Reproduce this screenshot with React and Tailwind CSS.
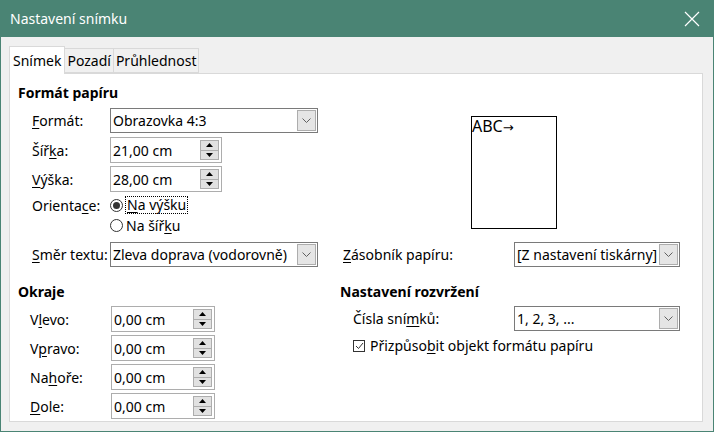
import React from 'react';

const font = "font-['Segoe_UI','Noto_Sans','Open_Sans',sans-serif]";

const U = ({ children }) => <span className="underline underline-offset-2">{children}</span>;

const Chevron = () => (
  <svg width="9" height="6" viewBox="0 0 9 6" fill="none">
    <path d="M0.5 0.5 L4.5 4.5 L8.5 0.5" stroke="#606060" strokeWidth="1" />
  </svg>
);

const Select = ({ value, w }) => (
  <div className={`flex h-[25px] items-stretch border border-[#7a7a7a] bg-white ${w}`}>
    <div className="flex flex-1 items-center overflow-hidden whitespace-nowrap pl-[2px]">{value}</div>
    <div className="m-px flex w-[19px] items-center justify-center border border-[#adadad] bg-[#e5e5e5]">
      <Chevron />
    </div>
  </div>
);

const Spin = ({ value, w }) => (
  <div className={`flex h-[26px] items-stretch border border-[#adadad] bg-white ${w}`}>
    <div className="flex flex-1 items-center pl-[2px]">{value}</div>
    <div className="my-[2px] mr-[2px] flex w-[19px] flex-col">
      <div className="flex flex-1 items-center justify-center border border-[#adadad] bg-[#e1e1e1]">
        <svg width="7" height="4" viewBox="0 0 7 4"><path d="M0 4 L3.5 0 L7 4 Z" fill="#000" /></svg>
      </div>
      <div className="flex flex-1 items-center justify-center border border-t-0 border-[#adadad] bg-[#e1e1e1]">
        <svg width="7" height="4" viewBox="0 0 7 4"><path d="M0 0 L3.5 4 L7 0 Z" fill="#000" /></svg>
      </div>
    </div>
  </div>
);

const Row = ({ label, children, className = '', lw = 'w-[78px]' }) => (
  <div className={`flex items-center ${className}`}>
    <div className={`${lw} whitespace-nowrap`}>{label}</div>
    {children}
  </div>
);

export default function App() {
  return (
    <div className={`flex h-[432px] w-[714px] flex-col bg-[#4a8474] text-[14px] text-black ${font}`}>
      {/* title bar */}
      <div className="flex h-[37px] shrink-0 items-center justify-between pl-[10px] pr-[14px] text-white">
        <span className="text-[14px]">Nastavení snímku</span>
        <svg width="16" height="16" viewBox="0 0 16 16">
          <path d="M1 1 L15 15 M15 1 L1 15" stroke="#fff" strokeWidth="1.2" />
        </svg>
      </div>

      <div className="mx-px mb-px flex flex-1 flex-col bg-[#f0f0f0] px-[8px] pb-[9px] pt-[9px]">
        {/* tabs */}
        <div className="flex h-[27px] items-end text-[14px]">
          <div className="relative z-10 -mb-px flex h-[28px] items-center border border-b-0 border-[#d9d9d9] bg-white px-[3px]">Snímek</div>
          <div className="flex h-[25px] items-center border border-l-0 border-[#d9d9d9] px-[2px]">Pozadí</div>
          <div className="flex h-[25px] items-center border border-l-0 border-[#d9d9d9] px-[2px]">Průhlednost</div>
        </div>

        {/* panel */}
        <div className="flex w-[694px] flex-1 flex-col border border-[#d9d9d9] bg-white pl-[8px] pt-[9px]">
          {/* paper format */}
          <div className="flex items-end">
            <div className="flex w-[300px] flex-col">
              <div className="h-[20px] font-bold leading-[20px]">Formát papíru</div>
              <div className="flex flex-col pl-[14px] pt-[5px]">
                <Row label={<><U>F</U>ormát:</>}>
                  <Select value="Obrazovka 4:3" w="w-[208px]" />
                </Row>
                <Row label={<>Šíř<U>k</U>a:</>} className="mt-[4px]">
                  <Spin value="21,00 cm" w="w-[112px]" />
                </Row>
                <Row label={<><U>V</U>ýška:</>} className="mt-[3px]">
                  <Spin value="28,00 cm" w="w-[112px]" />
                </Row>
                <Row label={<>Orienta<U>c</U>e:</>} className="mt-[4px] h-[18px]">
                  <div className="flex items-center gap-[2px]">
                    <span className="flex h-[13px] w-[13px] items-center justify-center rounded-full border border-[#333] bg-white">
                      <span className="h-[7px] w-[7px] rounded-full bg-[#333]" />
                    </span>
                    <span className="border border-dotted border-black px-px leading-[16px]"><U>N</U>a výšku</span>
                  </div>
                </Row>
                <Row label="" className="mt-[2px] h-[18px]">
                  <div className="flex items-center gap-[3px]">
                    <span className="h-[13px] w-[13px] rounded-full border border-[#333] bg-white" />
                    <span>Na šíř<U>k</U>u</span>
                  </div>
                </Row>
                <Row label={<><U>S</U>měr textu:</>} className="mt-[8px]">
                  <Select value="Zleva doprava (vodorovně)" w="w-[208px]" />
                </Row>
              </div>
            </div>

            <div className="ml-[22px] flex flex-col">
              <div className="ml-[131px] flex h-[113px] w-[86px] flex-col border-[1.5px] border-black">
                <div className="text-[16px] leading-[18px]">ABC<span className="font-['DejaVu_Sans'] text-[13px]">→</span></div>
              </div>
              <div className="mt-[13px] flex items-center pl-[3px]">
                <div className="w-[171px]"><U>Z</U>ásobník papíru:</div>
                <Select value="[Z nastavení tiskárny]" w="w-[166px]" />
              </div>
            </div>
          </div>

          {/* margins + layout */}
          <div className="mt-[15px] flex items-start">
            <div className="flex w-[322px] flex-col">
              <div className="h-[20px] font-bold leading-[20px]">Okraje</div>
              <div className="flex flex-col gap-[3px] pl-[12px] pt-[4px]">
                <Row lw="w-[81px]" label={<>V<U>l</U>evo:</>}>
                  <Spin value="0,00 cm" w="w-[104px]" />
                </Row>
                <Row lw="w-[81px]" label={<>V<U>p</U>ravo:</>}>
                  <Spin value="0,00 cm" w="w-[104px]" />
                </Row>
                <Row lw="w-[81px]" label={<>Na<U>h</U>oře:</>}>
                  <Spin value="0,00 cm" w="w-[104px]" />
                </Row>
                <Row lw="w-[81px]" label={<><U>D</U>ole:</>}>
                  <Spin value="0,00 cm" w="w-[104px]" />
                </Row>
              </div>
            </div>

            <div className="flex flex-col">
              <div className="h-[20px] font-bold leading-[20px]">Nastavení rozvržení</div>
              <div className="flex flex-col pl-[13px] pt-[4px]">
                <div className="flex items-center">
                  <div className="w-[161px]">Čísla sní<U>m</U>ků:</div>
                  <Select value="1, 2, 3, ..." w="w-[166px]" />
                </div>
                <div className="mt-[4px] flex items-center gap-[5px]">
                  <span className="flex h-[12px] w-[12px] items-center justify-center border border-[#333]">
                    <svg width="9" height="8" viewBox="0 0 9 8"><path d="M1 4 L3.5 6.5 L8 1" stroke="#333" strokeWidth="1" fill="none" /></svg>
                  </span>
                  <span>Přizpůso<U>b</U>it objekt formátu papíru</span>
                </div>
              </div>
            </div>
          </div>
        </div>
      </div>
    </div>
  );
}
